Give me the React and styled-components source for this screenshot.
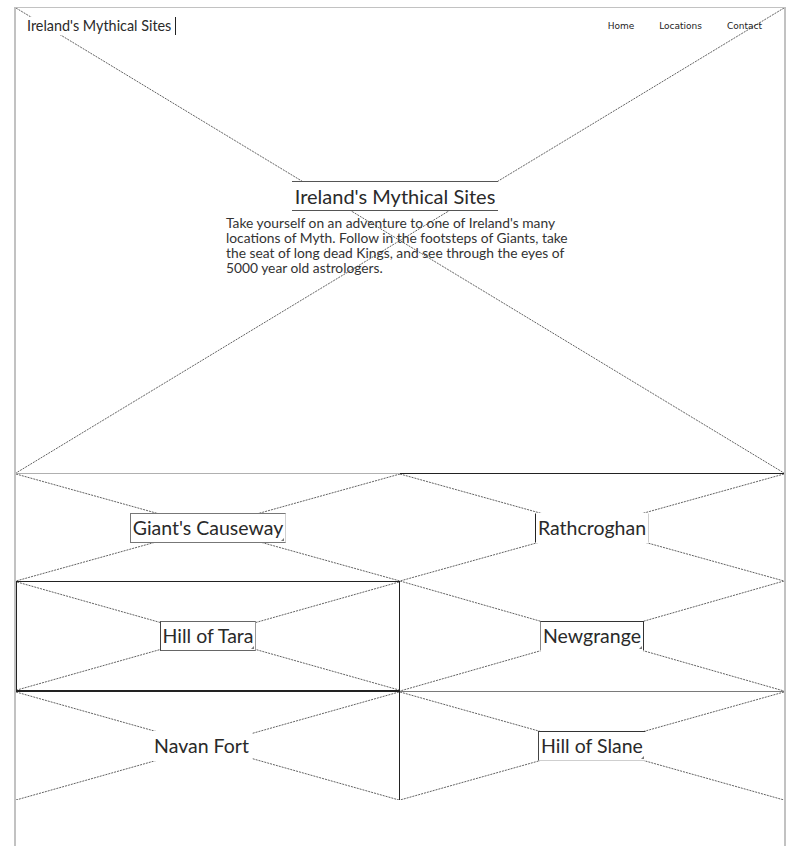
import styled, { createGlobalStyle } from "styled-components";

const GlobalStyle = createGlobalStyle`
  body {
    margin: 0;
    background: #fff;
    font-family: Lato, "Liberation Sans", sans-serif;
    color: #222;
  }
`;

const sites = [
  { name: "Giant's Causeway", top: "#b0b0b0", label: { t: "#777", l: "#777", b: "#777", r: "#d0d0d0" }, mark: true },
  { name: "Rathcroghan", top: "#222", label: { l: "#222", r: "#cfcfcf" } },
  { name: "Hill of Tara", box: true, label: { t: "#666", l: "#444", b: "#666", r: "#999" }, mark: true },
  { name: "Newgrange", label: { t: "#333", l: "#888", r: "#333" }, mark: true },
  { name: "Navan Fort", top: "#222", right: "#222", shift: -6, label: {} },
  { name: "Hill of Slane", top: "#7a7a7a", label: { t: "#333", l: "#444", b: "#cfcfcf" }, mark: true },
];

function Cross() {
  return (
    <Lines>
      <line x1="0" y1="0" x2="100%" y2="100%" />
      <line x1="100%" y1="0" x2="0" y2="100%" />
    </Lines>
  );
}

function App() {
  return (
    <>
      <GlobalStyle />
      <Frame>
        <Hero>
          <Cross />
          <Header>
            <Logo>Ireland's Mythical Sites</Logo>
            <Nav>
              <a>Home</a>
              <a>Locations</a>
              <a>Contact</a>
            </Nav>
          </Header>
          <Intro>
            <Title>Ireland's Mythical Sites</Title>
            <Blurb>
              Take yourself on an adventure to one of Ireland's many locations of Myth. Follow in the
              footsteps of Giants, take the seat of long dead Kings, and see through the eyes of 5000
              year old astrologers.
            </Blurb>
          </Intro>
        </Hero>

        <Grid>
          {sites.map((site) => (
            <Cell key={site.name} $box={site.box} $top={site.top} $right={site.right}>
              <Cross />
              <Label $edge={site.label} $mark={site.mark} $shift={site.shift}>
                {site.name}
              </Label>
            </Cell>
          ))}
        </Grid>
      </Frame>
    </>
  );
}

const Frame = styled.div`
  margin: 7px 0 0 14px;
  width: 772px;
  min-height: 839px;
  box-sizing: border-box;
  border: 2px solid #c2c2c2;
  border-top-width: 1px;
  border-bottom: none;
`;

const Lines = styled.svg`
  position: absolute;
  inset: 0;
  width: 100%;
  height: 100%;
  pointer-events: none;

  line {
    stroke: #3a3a3a;
    stroke-width: 0.8;
    stroke-dasharray: 2 1;
  }
`;

const Hero = styled.section`
  position: relative;
  height: 465px;
`;

const Header = styled.header`
  position: relative;
  display: flex;
  justify-content: space-between;
  align-items: center;
  padding: 9px 22px 0 11px;
`;

const Logo = styled.span`
  background: #fff;
  font-size: 14.4px;
  line-height: 18px;
  padding-right: 4px;
  border-right: 1px solid #222;
  color: #2a2a2a;
`;

const Nav = styled.nav`
  display: flex;
  gap: 25px;
  font-family: "DejaVu Sans", Verdana, sans-serif;
  font-size: 9px;
  color: #222;

  a {
    cursor: pointer;
  }
`;

const Intro = styled.div`
  position: relative;
  display: flex;
  flex-direction: column;
  align-items: center;
  margin-top: 146px;
  padding-right: 10px;
`;

const Title = styled.h1`
  margin: 0;
  background: #fff;
  font-size: 20px;
  font-weight: 400;
  line-height: 28px;
  padding: 0 3px;
  border-top: 1px solid #555;
  border-bottom: 1px solid #555;
  color: #2a2a2a;
`;

const Blurb = styled.p`
  width: 348px;
  margin: 4px 0 0 10px;
  font-size: 13.8px;
  line-height: 15px;
  color: #333;
`;

const Grid = styled.div`
  display: grid;
  grid-template-columns: 1fr 1fr;
  grid-template-rows: 108px 110px 109px;
`;

const Cell = styled.div`
  position: relative;
  display: flex;
  align-items: center;
  justify-content: center;
  box-sizing: border-box;
  border-top: ${(p) => (p.$top ? `1px solid ${p.$top}` : "none")};
  border-right: ${(p) => (p.$right ? `1px solid ${p.$right}` : "none")};
  ${(p) => p.$box && "border: 1px solid #222;"}
`;

const edge = (c) => (c ? `1px solid ${c}` : "1px solid transparent");

const Label = styled.span`
  position: relative;
  left: ${(p) => p.$shift || 0}px;
  background: #fff;
  font-size: 19.5px;
  line-height: 28px;
  padding: 0 2px;
  color: #2a2a2a;
  border-top: ${(p) => edge(p.$edge.t)};
  border-left: ${(p) => edge(p.$edge.l)};
  border-bottom: ${(p) => edge(p.$edge.b)};
  border-right: ${(p) => edge(p.$edge.r)};

  &::after {
    content: "";
    display: ${(p) => (p.$mark ? "block" : "none")};
    position: absolute;
    right: 1px;
    bottom: 1px;
    border-left: 3px solid transparent;
    border-bottom: 3px solid #777;
  }
`;

export default App;
